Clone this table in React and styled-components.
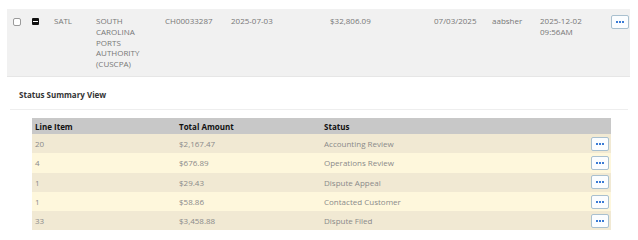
import React from "react";
import styled, { createGlobalStyle } from "styled-components";

const GlobalStyle = createGlobalStyle`
  body {
    margin: 0;
    background: #ffffff;
    font-family: "Open Sans", "Liberation Sans", sans-serif;
  }
`;

const summary = [
  { line: "20", amount: "$2,167.47", status: "Accounting Review" },
  { line: "4", amount: "$676.89", status: "Operations Review" },
  { line: "1", amount: "$29.43", status: "Dispute Appeal" },
  { line: "1", amount: "$58.86", status: "Contacted Customer" },
  { line: "33", amount: "$3,458.88", status: "Dispute Filed" },
];

const App = () => {
  return (
    <>
      <GlobalStyle />
      <Page>
        <ClaimRow>
          <Check />
          <Collapse />
          <Cell>SATL</Cell>
          <Cell>
            SOUTH
            <br />
            CAROLINA
            <br />
            PORTS
            <br />
            AUTHORITY
            <br />
            (CUSCPA)
          </Cell>
          <Cell>CH00033287</Cell>
          <Cell>2025-07-03</Cell>
          <Cell>$32,806.09</Cell>
          <Cell>07/03/2025</Cell>
          <Cell>aabsher</Cell>
          <Cell>
            2025-12-02
            <br />
            09:56AM
          </Cell>
          <MoreButton>
            <Dots />
          </MoreButton>
        </ClaimRow>

        <SectionTitle>Status Summary View</SectionTitle>

        <Table>
          <HeadRow>
            <HeadCell>Line Item</HeadCell>
            <HeadCell>Total Amount</HeadCell>
            <HeadCell>Status</HeadCell>
            <HeadCell />
          </HeadRow>
          {summary.map((item, index) => (
            <BodyRow key={index} odd={index % 2 === 0}>
              <BodyCell>{item.line}</BodyCell>
              <BodyCell>{item.amount}</BodyCell>
              <BodyCell>{item.status}</BodyCell>
              <ActionCell>
                <MoreButton>
                  <Dots />
                </MoreButton>
              </ActionCell>
            </BodyRow>
          ))}
        </Table>
      </Page>
    </>
  );
};

const Dots = () => (
  <svg width="8" height="2" viewBox="0 0 8 2">
    <rect x="0" y="0" width="2" height="2" fill="#3a7bd5" />
    <rect x="3" y="0" width="2" height="2" fill="#3a7bd5" />
    <rect x="6" y="0" width="2" height="2" fill="#3a7bd5" />
  </svg>
);

const Page = styled.div`
  width: 638px;
  height: 240px;
  padding-top: 9px;
  box-sizing: border-box;
  overflow: hidden;
`;

const ClaimRow = styled.div`
  margin-left: 7px;
  width: 623px;
  height: 68px;
  box-sizing: border-box;
  background: #f1f1f1;
  border-bottom: 1px solid #e6e6e6;
  padding: 7px 0 0 6px;
  display: grid;
  grid-template-columns: 19px 22px 42px 69px 66px 99px 104px 58px 48px 71px 18px;
  align-items: start;
  font-size: 8px;
  line-height: 10.8px;
  color: #777777;
`;

const Cell = styled.div`
  white-space: nowrap;
`;

const Check = styled.span`
  width: 6px;
  height: 6px;
  margin-top: 2px;
  border: 1px solid #9a9a9a;
  border-radius: 2px;
  background: #ffffff;
`;

const Collapse = styled.span`
  position: relative;
  width: 7px;
  height: 7px;
  margin-top: 2px;
  background: #111111;
  border-radius: 1px;

  &::after {
    content: "";
    position: absolute;
    left: 1px;
    right: 1px;
    top: 3px;
    height: 1px;
    background: #ffffff;
  }
`;

const MoreButton = styled.button`
  width: 18px;
  height: 14px;
  margin-top: -1px;
  padding: 0;
  border: 1px solid #a9c0cf;
  border-radius: 2px;
  background: #fbfdff;
  display: flex;
  align-items: center;
  justify-content: center;
  cursor: pointer;
`;

const SectionTitle = styled.div`
  margin: 12px 10px 0 10px;
  padding: 0 0 9px 9px;
  width: 609px;
  border-bottom: 1px solid #eeeeee;
  font-size: 8px;
  font-weight: 700;
  line-height: 11px;
  color: #333333;
`;

const Table = styled.div`
  margin: 8px 0 0 32px;
  width: 579px;
  display: grid;
  grid-template-columns: 144px 145px 1fr 24px;
  font-size: 8px;
`;

const HeadRow = styled.div`
  display: contents;
`;

const HeadCell = styled.div`
  height: 16px;
  line-height: 17px;
  padding-left: 3px;
  background: #c8c8c8;
  font-weight: 700;
  color: #111111;
`;

const BodyRow = styled.div`
  display: contents;

  & > div {
    background: ${({ odd }) => (odd ? "#f1e9d3" : "#fef7dc")};
  }
`;

const BodyCell = styled.div`
  height: 19.3px;
  line-height: 19.3px;
  padding-left: 3px;
  color: #8a8a8a;
`;

const ActionCell = styled.div`
  height: 19.3px;
  padding-right: 2px;
  display: flex;
  align-items: center;
  justify-content: flex-end;

  & > button {
    margin-top: 0;
  }
`;

export default App;
